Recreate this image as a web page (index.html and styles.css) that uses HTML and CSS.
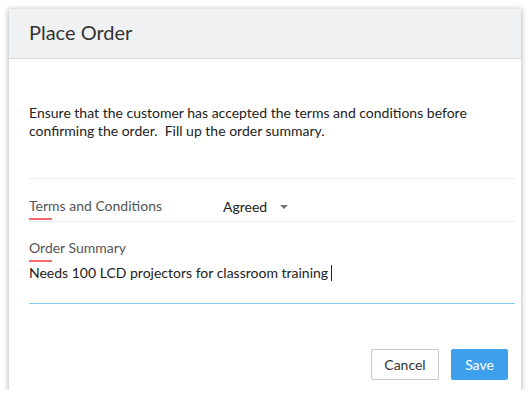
FILE: index.html
```html
<!DOCTYPE html>
<html>
<head>
<meta charset="utf-8">
<link rel="stylesheet" href="styles.css">
</head>
<body>
<div class="dialog">
  <div class="header"><h1 class="title">Place Order</h1></div>
  <div class="content">
    <p class="intro">Ensure that the customer has accepted the terms and conditions before confirming the order.&nbsp; Fill up the order summary.</p>
    <div class="row terms">
      <div class="label">Terms and Conditions</div>
      <div class="select">Agreed <span class="caret"></span></div>
    </div>
    <div class="field">
      <div class="label">Order Summary</div>
      <div class="input">Needs 100 LCD projectors for classroom training<span class="cursor"></span></div>
    </div>
  </div>
  <div class="footer">
    <button class="btn cancel">Cancel</button>
    <button class="btn save">Save</button>
  </div>
</div>
</body>
</html>
```
FILE: styles.css
```css
html, body { margin: 0; padding: 0; background: #fff; }
body { font-family: Lato, "Open Sans", sans-serif; color: #222; }
.dialog {
  margin: 9px 0 0 9px;
  width: 512px;
  height: 381px;
  box-sizing: border-box;
  background: #fff;
  box-shadow: 0 1px 5px 1px rgba(0,0,0,0.25);
  display: flex;
  flex-direction: column;
}
.header {
  height: 50px;
  box-sizing: border-box;
  background: #f0f1f3;
  border-bottom: 1px solid #d8d8d8;
  display: flex;
  align-items: center;
  padding-left: 20px;
}
.title { margin: 0; font-size: 20px; font-weight: 400; color: #333; padding-bottom: 3px; }
.content { padding: 0 6px 0 20px; flex: 1; }
.intro {
  margin: 45px 0 0 0;
  font-size: 14px;
  line-height: 18px;
  color: #222;
  padding-bottom: 38px;
  border-bottom: 1px solid #ececec;
}
.row { display: flex; align-items: flex-end; }
.terms { height: 43px; box-sizing: border-box; padding-bottom: 1px; border-bottom: 1px solid #ececec; }
.label {
  font-size: 14px;
  line-height: 17px;
  color: #555;
  position: relative;
  padding-bottom: 6px;
}
.label::after {
  content: "";
  position: absolute;
  left: 0;
  bottom: 0;
  width: 23px;
  height: 2px;
  background: #f26d6d;
}
.terms .label { width: 194px; }
.select { font-size: 14px; line-height: 17px; color: #222; display: flex; align-items: center; margin-bottom: 5px; }
.caret {
  display: inline-block;
  width: 0; height: 0;
  border-left: 4px solid transparent;
  border-right: 4px solid transparent;
  border-top: 4px solid #777;
  margin-left: 13px;
}
.field { padding-top: 17px; border-bottom: 1px solid #7fcff2; height: 82px; box-sizing: border-box; }
.input { font-size: 14px; line-height: 17px; color: #222; margin-top: 2px; display: flex; align-items: center; }
.cursor { display: inline-block; width: 1px; height: 16px; background: #222; margin-left: 3px; }
.footer { display: flex; justify-content: flex-end; gap: 12px; padding: 0 13px 10px 0; }
.btn {
  font-family: Lato, "Open Sans", sans-serif;
  font-size: 14px;
  height: 31px;
  border-radius: 2px;
  padding: 0;
  cursor: pointer;
}
.cancel { width: 68px; background: #fff; border: 1px solid #c8c8c8; color: #333; }
.save { width: 57px; background: #3ea0ec; border: 1px solid #3ea0ec; color: #fff; }
```
